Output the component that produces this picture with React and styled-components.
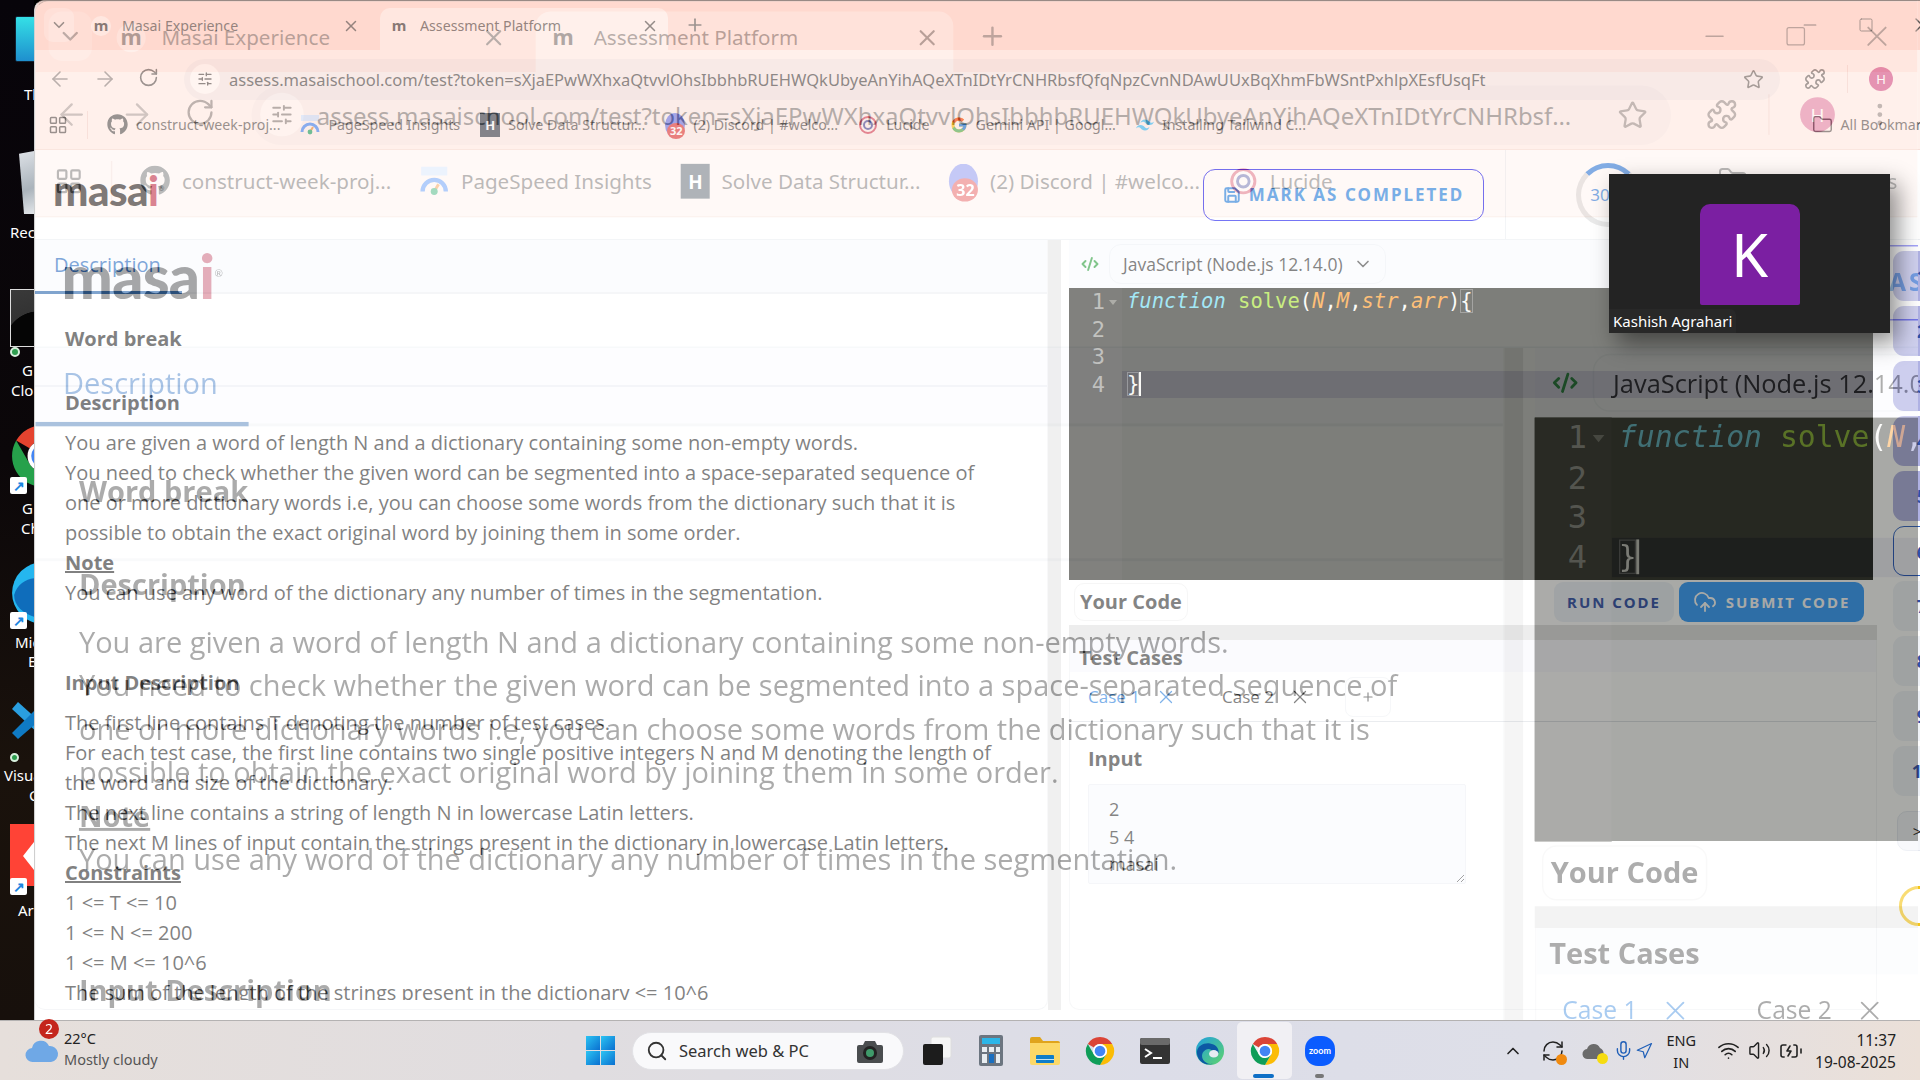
import styled, { createGlobalStyle } from "styled-components";
import {
  ArrowLeft,
  ArrowRight,
  RotateCw,
  Star,
  Puzzle,
  MoreVertical,
  X,
  Plus,
  ChevronDown,
  ChevronUp,
  LayoutGrid,
  Folder,
  Search,
  Minus,
  Square,
  SlidersHorizontal,
  CloudUpload,
  CodeXml,
  Save,
  Wifi,
  Volume2,
  RefreshCw,
  Mic,
  Navigation,
  BatteryCharging,
} from "lucide-react";
import { FaGithub } from "react-icons/fa";
import { FcGoogle } from "react-icons/fc";
import { SiTailwindcss } from "react-icons/si";

const PAGE_URL =
  "assess.masaischool.com/test?token=sXjaEPwWXhxaQtvvlOhsIbbhbRUEHWQkUbyeAnYihAQeXTnIDtYrCNHRbsfQfqNpzCvnNDAwUUxBqXhmFbWSntPxhlpXEsfUsqFt";

const GlobalStyle = createGlobalStyle`
  html, body {
    margin: 0;
    padding: 0;
    overflow: hidden;
    background: #000;
  }
  * { box-sizing: border-box; }
`;

const Screen = styled.div`
  position: relative;
  width: 1920px;
  height: 1080px;
  overflow: hidden;
  display: flex;
  flex-direction: column;
  font-family: "Noto Sans", "Open Sans", sans-serif;
`;
const MainRow = styled.div`
  display: flex;
  height: 1020px;
  overflow: hidden;
`;

/* desktop strip */
const Desktop = styled.div`
  position: relative;
  flex: 0 0 34px;
  height: 100%;
  overflow: hidden;
  background: linear-gradient(180deg, #07040a 0%, #0b0709 45%, #1a120c 75%, #17100c 100%);
`;
const DesktopLabel = styled.span`
  position: absolute;
  left: ${(p) => p.$x}px;
  top: ${(p) => p.$y}px;
  color: #fff;
  font-size: 15px;
  line-height: 20px;
  white-space: nowrap;
`;
const DesktopArt = styled.div`
  position: absolute;
  left: ${(p) => p.$x}px;
  top: ${(p) => p.$y}px;
  width: ${(p) => p.$w}px;
  height: ${(p) => p.$h}px;
  display: block;
`;
const TealTile = styled(DesktopArt)`
  background: linear-gradient(180deg, #34e0e6, #1e8fce);
  border-radius: 2px;
  border: 1px solid #123;
`;
const BinArt = styled(DesktopArt)`
  background: linear-gradient(160deg, #dfe3e8, #aab3bb 60%, #e6e9ec);
  clip-path: polygon(0 6%, 100% 0, 100% 100%, 25% 100%);
`;
const ThumbArt = styled(DesktopArt)`
  background: radial-gradient(circle at 100% 100%, #050505 55%, #333 56%, #3a3a3a);
  border: 1px solid #ddd;
`;
const RedTile = styled(DesktopArt)`
  background: #ff4336;
`;
const WhiteArrow = styled(DesktopArt)`
  background: #fff;
  clip-path: polygon(100% 0, 100% 100%, 0 50%);
`;
const CheckDot = styled(DesktopArt)`
  background: #2e9e4f;
  border: 2px solid #d7f0dd;
  border-radius: 50%;
`;
const Shortcut = styled(DesktopArt)`
  width: 17px;
  height: 17px;
  background: #fff;
  border-radius: 2px;
  display: flex;
  align-items: center;
  justify-content: center;
  color: #1b86e0;
  font-size: 14px;
  font-weight: 700;
  line-height: 1;
`;

/* browser */
const Frame = styled.div`
  width: ${(p) => p.$w}px;
  height: ${(p) => p.$h}px;
  flex-shrink: 0;
  overflow: hidden;
  background: #fff;
  border-top: 1px solid #9a8a85;
  border-left: 1px solid #cfcfcf;
  border-top-left-radius: 10px;
  display: flex;
  flex-direction: column;
`;
const TabStrip = styled.div`
  height: 49px;
  flex-shrink: 0;
  background: #ffd9cf;
  display: flex;
  align-items: flex-end;
  color: #5c5654;
`;
const TabSearch = styled.div`
  width: 30px;
  height: 34px;
  margin: 0 8px 8px 9px;
  border-radius: 9px;
  background: #ffe5de;
  display: flex;
  align-items: center;
  justify-content: center;
`;
const Tab = styled.div`
  width: ${(p) => p.$w}px;
  height: 42px;
  padding: 0 9px 7px 9px;
  margin-right: 11px;
  border-radius: 10px 10px 0 0;
  background: ${(p) => (p.$active ? "#fff1ec" : "transparent")};
  display: flex;
  align-items: center;
  gap: 11px;
  font-size: 14.2px;
  color: #4f4a48;
  white-space: nowrap;
`;
const Favicon = styled.span`
  width: 20px;
  height: 20px;
  border-radius: 50%;
  flex-shrink: 0;
  background: #fff1ec;
  color: #3a3a3a;
  font-weight: 700;
  font-size: 15px;
  line-height: 18px;
  text-align: center;
`;
const TabTitle = styled.span`
  flex: 1;
  overflow: hidden;
`;
const AddTab = styled.div`
  width: 32px;
  height: 34px;
  display: flex;
  align-items: center;
  justify-content: center;
  margin-bottom: 8px;
`;
const WinControls = styled.div`
  margin-left: auto;
  display: flex;
  align-self: stretch;
`;
const WinButton = styled.div`
  width: 56px;
  display: flex;
  align-items: center;
  justify-content: center;
  padding-bottom: 1px;
  color: #5c5654;
`;
const Toolbar = styled.div`
  height: 50px;
  flex-shrink: 0;
  padding-top: 8px;
  background: #fff1ec;
  display: flex;
  align-items: center;
  color: #6b6462;
`;
const NavGroup = styled.div`
  width: 149px;
  flex-shrink: 0;
  padding-left: 13px;
  display: flex;
  gap: 21px;
  color: #8c8482;
`;
const AddressPill = styled.div`
  flex: 1;
  min-width: 0;
  height: 41px;
  border-radius: 21px;
  background: #f4e7e4;
  display: flex;
  align-items: center;
  padding: 0 16px 0 6px;
`;
const SiteInfo = styled.span`
  width: 30px;
  height: 30px;
  flex-shrink: 0;
  border-radius: 50%;
  background: #fff8f5;
  display: flex;
  align-items: center;
  justify-content: center;
  margin-right: 9px;
  color: #4f4a48;
`;
const UrlText = styled.span`
  flex: 1;
  min-width: 0;
  overflow: hidden;
  white-space: nowrap;
  text-overflow: ellipsis;
  font-size: 16.5px;
  color: #444;
  margin-right: 24px;
`;
const ToolbarEnd = styled.div`
  width: 170px;
  flex-shrink: 0;
  display: flex;
  align-items: center;
  padding-left: 24px;
`;
const ToolbarRule = styled.span`
  width: 1px;
  height: 28px;
  background: #f3d6cf;
  margin: 0 21px;
`;
const BookmarkRule = styled.span`
  width: 1px;
  height: 28px;
  background: #f3d6cf;
  margin: 0 19px;
`;
const ProfileBadge = styled.span`
  width: 24px;
  height: 24px;
  border-radius: 50%;
  flex-shrink: 0;
  background: #d4568c;
  color: #fff;
  font-size: 13px;
  text-align: center;
  line-height: 24px;
  margin-right: 21px;
`;
const BookmarkBar = styled.div`
  height: 50px;
  flex-shrink: 0;
  background: #fff1ec;
  border-bottom: 1px solid #f7dfd8;
  display: flex;
  align-items: center;
  padding-left: 13px;
  color: #57514f;
`;
const BookmarkItem = styled.div`
  display: flex;
  align-items: center;
  gap: 8px;
  margin-right: 20px;
  font-size: 14.2px;
  white-space: nowrap;
  flex-shrink: 0;
`;
const BookmarkEnd = styled.div`
  margin-left: auto;
  display: flex;
  align-items: center;
  gap: 8px;
  padding-right: 14px;
  font-size: 14.2px;
  white-space: nowrap;
`;
const HackerIcon = styled.span`
  width: 20px;
  height: 24px;
  background: #39424e;
  color: #fff;
  font-size: 13px;
  font-weight: 700;
  text-align: center;
  line-height: 24px;
`;
const DiscordIcon = styled.span`
  position: relative;
  width: 20px;
  height: 24px;
  border-radius: 50%;
  background: #6f78e8;
`;
const DiscordBadge = styled.span`
  position: absolute;
  left: 2px;
  bottom: -2px;
  width: 18px;
  height: 16px;
  border-radius: 50%;
  background: #e23b3b;
  color: #fff;
  font-size: 11px;
  font-weight: 700;
  line-height: 16px;
  text-align: center;
`;

/* page */
const PageArea = styled.div`
  width: 1916px;
  flex: 1;
  min-height: 0;
  background: #fff;
  display: flex;
  flex-direction: column;
`;
const PageHeader = styled.div`
  height: 90px;
  flex-shrink: 0;
  display: flex;
  align-items: center;
  padding-left: 18px;
  border-bottom: 1px solid #eceff2;
`;
const Logo = styled.div`
  font-family: "Lato", sans-serif;
  font-weight: 900;
  font-size: 42px;
  letter-spacing: -0.5px;
  color: #2a2a2a;
  line-height: 1;
  padding-bottom: 10px;
`;
const LogoAccent = styled.span`
  color: #c23b55;
`;
const LogoMark = styled.sup`
  font-size: 7px;
  font-weight: 400;
  color: #555;
`;
const MarkButton = styled.div`
  margin-left: auto;
  margin-right: 21px;
  width: 281px;
  height: 52px;
  border: 1.5px solid #1a1aee;
  border-radius: 12px;
  display: flex;
  align-items: center;
  justify-content: center;
  gap: 8px;
  color: #2082e3;
  font-size: 17px;
  font-weight: 700;
  letter-spacing: 2px;
  white-space: nowrap;
`;
const TimerBox = styled.div`
  width: 446px;
  height: 100%;
  border-left: 1px solid #eceff2;
  padding-left: 70px;
  display: flex;
  align-items: center;
`;
const TimerRing = styled.div`
  width: 64px;
  height: 64px;
  border-radius: 50%;
  border: 5px solid #dcdcdc;
  border-top-color: #2f7fe0;
  padding-right: 16px;
  color: #2f7fe0;
  font-size: 17px;
  display: flex;
  align-items: center;
  justify-content: center;
`;
const Workspace = styled.div`
  flex: 1;
  min-height: 0;
  display: flex;
  align-items: stretch;
`;
const LeftPanel = styled.div`
  width: 1013px;
  flex-shrink: 0;
  height: 770px;
  border-bottom: 1px solid #eef0f3;
  border-right: 1px solid #f3f4f6;
  border-radius: 0 0 10px 10px;
  display: flex;
  flex-direction: column;
`;
const TabRow = styled.div`
  height: 54px;
  flex-shrink: 0;
  background: #f9fbfe;
  border-bottom: 2px solid #eef0f3;
  display: flex;
`;
const DescriptionTab = styled.div`
  width: 147px;
  height: 54px;
  border-bottom: 3px solid #2c68ad;
  padding-left: 19px;
  color: #2a6bc0;
  font-family: "Open Sans", sans-serif;
  font-size: 20px;
  line-height: 50px;
`;
const ProblemScroll = styled.div`
  height: 706px;
  overflow: hidden;
  padding-top: 30px;
  font-family: "Open Sans", sans-serif;
  font-size: 20px;
  line-height: 30px;
  color: #2e2e2e;
`;
const ProblemTitle = styled.div`
  font-weight: 700;
  padding-left: 30px;
  height: 61px;
`;
const SectionRule = styled.div`
  height: 2px;
  background: #f1f2f5;
`;
const SectionHeading = styled.div`
  font-weight: 700;
  padding-left: 30px;
  margin: ${(p) => p.$margin || "0"};
  text-decoration: ${(p) => (p.$under ? "underline" : "none")};
`;
const TextLine = styled.div`
  padding-left: 30px;
  white-space: nowrap;
`;
const Resizer = styled.div`
  width: 13px;
  height: 770px;
  flex-shrink: 0;
  background: #e6e6e6;
  margin-right: 8px;
`;
const RightColumn = styled.div`
  width: 808px;
  flex-shrink: 0;
  height: 770px;
  display: flex;
  flex-direction: column;
`;
const LanguageRow = styled.div`
  height: 48px;
  flex-shrink: 0;
  background: #f9fbfe;
  display: flex;
  align-items: center;
  padding-left: 12px;
  color: #2e9e3f;
`;
const LanguageSelect = styled.div`
  width: 277px;
  height: 40px;
  margin-left: 10px;
  border: 1px solid #edf0f5;
  border-radius: 12px;
  display: flex;
  align-items: center;
  justify-content: space-between;
  padding: 0 12px 0 13px;
  font-family: "Open Sans", sans-serif;
  font-size: 17.5px;
  color: #333;
  white-space: nowrap;
`;
const Editor = styled.div`
  height: 292px;
  flex-shrink: 0;
  margin-right: 4px;
  background: #272822;
  display: flex;
  font-family: "DejaVu Sans Mono", "Liberation Mono", monospace;
  font-size: 20.5px;
  line-height: 27.6px;
  color: #f8f8f2;
`;
const EditorGutter = styled.div`
  position: relative;
  width: 53px;
  flex-shrink: 0;
  background: #2d2e28;
  color: #9a9a94;
  text-align: right;
  padding-right: 17px;
  font-size: 22px;
`;
const FoldMark = styled.span`
  position: absolute;
  right: 5px;
  top: 12px;
  border: 4px solid transparent;
  border-top: 5px solid #77776f;
`;
const EditorCode = styled.div`
  flex: 1;
`;
const CodeRow = styled.div`
  height: 27.6px;
  padding-left: 5px;
  background: ${(p) => (p.$active ? "#111217" : "transparent")};
  white-space: pre;
`;
const Keyword = styled.span`
  color: #66d9ef;
  font-style: italic;
`;
const FnName = styled.span`
  color: #a6e22e;
`;
const Param = styled.span`
  color: #fd971f;
  font-style: italic;
`;
const Bracket = styled.span`
  box-shadow: inset 0 0 0 1px rgba(255, 255, 255, 0.3);
  border-right: ${(p) => (p.$cursor ? "2px solid #f8f8f0" : "0")};
`;
const ActionsRow = styled.div`
  height: 45px;
  flex-shrink: 0;
  display: flex;
  align-items: center;
  padding: 0 13px 2px 5px;
`;
const YourCode = styled.div`
  border: 1px solid #f1f1f1;
  border-radius: 10px;
  padding: 0 5px;
  line-height: 36px;
  font-family: "Open Sans", sans-serif;
  font-size: 20px;
  font-weight: 700;
  color: #333;
`;
const RunButton = styled.div`
  margin-left: auto;
  width: 120px;
  height: 40px;
  border-radius: 9px;
  background: #edf2f8;
  color: #2f4fa8;
  font-size: 15px;
  font-weight: 700;
  letter-spacing: 2px;
  text-align: center;
  line-height: 40px;
`;
const SubmitButton = styled.div`
  margin-left: 5px;
  width: 185px;
  height: 40px;
  border-radius: 9px;
  background: #349dff;
  color: #fff;
  font-size: 15px;
  font-weight: 700;
  letter-spacing: 2px;
  display: flex;
  align-items: center;
  justify-content: center;
  gap: 9px;
`;
const GutterBar = styled.div`
  height: 15px;
  flex-shrink: 0;
  background: #e2e2e2;
`;
const TestCard = styled.div`
  flex: 1;
  border: 1px solid #f2f3f5;
  border-top: 0;
  border-radius: 0 0 10px 10px;
  font-family: "Open Sans", sans-serif;
`;
const TestTitle = styled.div`
  height: 32px;
  background: #f8f9fd;
  padding-left: 9px;
  font-size: 20px;
  font-weight: 700;
  color: #333;
  line-height: 36px;
`;
const CaseRow = styled.div`
  height: 50px;
  padding-left: 18px;
  border-bottom: 1px solid #dcdfe4;
  display: flex;
  align-items: center;
`;
const CaseTab = styled.div`
  width: ${(p) => p.$w}px;
  display: flex;
  align-items: center;
  gap: 15px;
  font-size: 17px;
  color: ${(p) => (p.$active ? "#2a7fdc" : "#333")};
  white-space: nowrap;
`;
const AddCase = styled.div`
  width: 46px;
  height: 40px;
  border: 1px solid #f0f2f5;
  border-radius: 8px;
  display: flex;
  align-items: center;
  justify-content: center;
  color: #444;
`;
const InputLabel = styled.div`
  margin: 22px 0 0 18px;
  font-size: 20px;
  font-weight: 700;
  color: #333;
  line-height: 30px;
`;
const InputBox = styled.textarea`
  display: block;
  width: 378px;
  height: 100px;
  margin: 10px 0 0 18px;
  padding: 11px 20px;
  border: 1px solid #eef0f5;
  border-radius: 2px;
  background: #f9fbfe;
  font-family: "Open Sans", sans-serif;
  font-size: 18px;
  line-height: 27.5px;
  color: #333;
  overflow: hidden;
  outline: none;
`;
const QuestionRail = styled.div`
  position: relative;
  flex: 1;
  padding: 11px 0 0 16px;
  display: flex;
  flex-direction: column;
  gap: 5px;
`;
const QuestionTile = styled.div`
  width: 58px;
  height: 50px;
  flex-shrink: 0;
  border-radius: 11px;
  background: ${(p) => (p.$done ? "#afb1e3" : p.$current ? "#fff" : "#f0f3f8")};
  border: ${(p) => (p.$current ? "1px solid #2f62c4" : "0")};
  color: #2f4fa8;
  font-size: 18px;
  font-weight: 700;
  text-align: center;
  line-height: 50px;
`;
const NextTile = styled.div`
  width: 40px;
  height: 40px;
  flex-shrink: 0;
  margin: 10px 0 0 4px;
  border-radius: 10px;
  background: #f4f6fa;
  border: 1px solid #e4e8f0;
  font-size: 15px;
  text-align: center;
  line-height: 38px;
  color: #222;
`;
const ClockRing = styled.div`
  width: 40px;
  height: 40px;
  flex-shrink: 0;
  margin: 30px 0 0 6px;
  border-radius: 50%;
  border: 3px solid #f5c518;
`;

/* ghost copy of the same window, cross-faded over the real one */
const GhostLayer = styled.div`
  position: absolute;
  left: 34px;
  top: 0;
  width: 1886px;
  height: 1020px;
  overflow: hidden;
  opacity: 0.4;
`;
const GhostScale = styled.div`
  width: 1299px;
  height: 704px;
  transform: scale(1.45);
  transform-origin: 0 0;
`;

/* zoom call tile */
const ZoomCard = styled.div`
  position: absolute;
  left: 1609px;
  top: 174px;
  width: 281px;
  height: 159px;
  background: #232323;
  box-shadow: 8px 10px 22px rgba(0, 0, 0, 0.45);
  display: flex;
  justify-content: center;
  padding-top: 30px;
`;
const ZoomAvatar = styled.div`
  width: 100px;
  height: 101px;
  border-radius: 10px 10px 2px 2px;
  background: #7b1fa2;
  color: #fff;
  font-size: 60px;
  text-align: center;
  line-height: 101px;
`;
const ZoomName = styled.div`
  position: absolute;
  left: 0;
  bottom: 0;
  padding: 0 4px;
  height: 24px;
  line-height: 24px;
  border-radius: 0 6px 0 0;
  background: #282828;
  color: #fff;
  font-size: 15px;
`;

/* taskbar */
const Taskbar = styled.div`
  position: relative;
  height: 60px;
  flex-shrink: 0;
  border-top: 1px solid #b4b2b2;
  background: linear-gradient(90deg, #e6dfdb 0%, #e0dde0 30%, #dcdde8 60%, #dedfe8 80%, #ebe0d8 100%);
  display: flex;
  align-items: center;
  color: #222;
`;
const Weather = styled.div`
  position: relative;
  width: 573px;
  flex-shrink: 0;
  padding: 0 0 4px 64px;
  font-size: 14.5px;
  line-height: 21px;
`;
const WeatherSub = styled.div`
  color: #555;
`;
const WeatherIcon = styled.svg`
  position: absolute;
  left: 24px;
  top: 10px;
`;
const WeatherBadge = styled.span`
  position: absolute;
  left: 39px;
  top: -9px;
  width: 20px;
  height: 20px;
  border-radius: 50%;
  background: #c4261d;
  color: #fff;
  font-size: 14px;
  text-align: center;
  line-height: 20px;
`;
const TaskButton = styled.div`
  position: relative;
  width: ${(p) => p.$w || 55}px;
  height: 57px;
  flex-shrink: 0;
  display: flex;
  align-items: center;
  justify-content: center;
  border-radius: 5px;
  background: ${(p) => (p.$active ? "#f1f0f4" : "transparent")};
`;
const ActiveBar = styled.span`
  position: absolute;
  bottom: 1px;
  left: 16px;
  width: 21px;
  height: 4px;
  border-radius: 2px;
  background: #0f6fc6;
`;
const RunningDot = styled.span`
  position: absolute;
  bottom: 1px;
  left: 23px;
  width: 9px;
  height: 4px;
  border-radius: 2px;
  background: #777;
`;
const SearchPill = styled.div`
  width: 272px;
  height: 38px;
  margin: 0 5px 0 4px;
  flex-shrink: 0;
  border-radius: 19px;
  background: #f9f9fb;
  border: 1px solid #e2e2e6;
  display: flex;
  align-items: center;
  padding: 0 18px 0 13px;
  gap: 11px;
  font-size: 16.5px;
  color: #333;
`;
const SearchText = styled.span`
  flex: 1;
  white-space: nowrap;
`;
const Tray = styled.div`
  margin-left: auto;
  display: flex;
  align-items: center;
  padding-right: 24px;
`;
const TrayIcon = styled.span`
  position: relative;
  display: flex;
  align-items: center;
  gap: 1px;
  margin-right: ${(p) => p.$gap || 14}px;
  color: ${(p) => p.$color || "#222"};
`;
const TrayDot = styled.span`
  position: absolute;
  right: -2px;
  bottom: -2px;
  width: 11px;
  height: 11px;
  border-radius: 50%;
  background: ${(p) => p.$color};
`;
const LangText = styled.div`
  font-size: 14.5px;
  line-height: 22px;
  text-align: center;
  margin: 0 21px 0 4px;
`;
const ClockText = styled.div`
  margin-left: 4px;
  font-size: 15.5px;
  line-height: 22px;
  text-align: right;
`;

function ChromeIcon() {
  return (
    <svg width="30" height="30" viewBox="0 0 32 32">
      <path d="M16 1a15 15 0 0 1 13 7.5H16a7.5 7.5 0 0 0-6.5 3.75L3 8.5A15 15 0 0 1 16 1z" fill="#db4437" />
      <path d="M29 8.5A15 15 0 0 1 16 31l6.5-11.25A7.5 7.5 0 0 0 16 8.5z" fill="#fbbc05" />
      <path d="M16 31A15 15 0 0 1 3 8.5l6.5 11.25A7.5 7.5 0 0 0 16 23.5L22.5 19.75z" fill="#0f9d58" />
      <circle cx="16" cy="16" r="7.5" fill="#fff" />
      <circle cx="16" cy="16" r="5.7" fill="#4285f4" />
    </svg>
  );
}

function EdgeIcon() {
  return (
    <svg width="30" height="30" viewBox="0 0 32 32">
      <defs>
        <linearGradient id="edgeTop" x1="0" y1="0" x2="1" y2="1">
          <stop offset="0" stopColor="#1f9fe0" />
          <stop offset="1" stopColor="#5fd46a" />
        </linearGradient>
      </defs>
      <circle cx="16" cy="16" r="15" fill="url(#edgeTop)" />
      <path d="M2 17c1-7 8-10 14-9 6 1 10 5 9 10-1 3-5 4-8 3 4-5-1-9-6-6-5 3-5 11 2 14 2 1 5 1 7 0-8 4-18-2-18-12z" fill="#0c59a4" />
      <ellipse cx="20" cy="19" rx="5" ry="4" fill="#e6ecf2" />
    </svg>
  );
}

function StartIcon() {
  return (
    <svg width="29" height="29" viewBox="0 0 29 29">
      <defs>
        <linearGradient id="startBlue" x1="0" y1="0" x2="1" y2="1">
          <stop offset="0" stopColor="#2bc4f3" />
          <stop offset="1" stopColor="#0a6fd0" />
        </linearGradient>
      </defs>
      <rect x="0" y="0" width="14" height="14" fill="url(#startBlue)" />
      <rect x="15" y="0" width="14" height="14" fill="url(#startBlue)" />
      <rect x="0" y="15" width="14" height="14" fill="url(#startBlue)" />
      <rect x="15" y="15" width="14" height="14" fill="url(#startBlue)" />
    </svg>
  );
}

function CameraIcon() {
  return (
    <svg width="30" height="30" viewBox="0 0 30 30">
      <path d="M10 5h10l2 4h4a2 2 0 0 1 2 2v14a2 2 0 0 1-2 2H4a2 2 0 0 1-2-2V11a2 2 0 0 1 2-2h4z" fill="#4a4d4f" />
      <circle cx="15" cy="17" r="7" fill="#222" />
      <circle cx="15" cy="17" r="4" fill="#3f9a6a" />
    </svg>
  );
}

function TaskViewIcon() {
  return (
    <svg width="30" height="30" viewBox="0 0 30 30">
      <rect x="9" y="1" width="20" height="21" rx="2" fill="#f6f6f6" stroke="#dedede" />
      <rect x="1" y="8" width="20" height="21" rx="2" fill="#1c1c1c" />
    </svg>
  );
}

function CalcIcon() {
  return (
    <svg width="24" height="31" viewBox="0 0 24 31">
      <rect width="24" height="31" rx="2" fill="#6c7580" />
      <rect x="3" y="3" width="18" height="6" fill="#2cb6e8" />
      <rect x="3" y="12" width="5" height="5" fill="#e8edf1" />
      <rect x="10" y="12" width="5" height="5" fill="#e8edf1" />
      <rect x="17" y="12" width="4" height="5" fill="#e8edf1" />
      <rect x="3" y="19" width="5" height="9" fill="#e8edf1" />
      <rect x="10" y="19" width="5" height="9" fill="#1a6fc0" />
      <rect x="17" y="19" width="4" height="9" fill="#e8edf1" />
    </svg>
  );
}

function FolderIcon() {
  return (
    <svg width="30" height="28" viewBox="0 0 30 28">
      <path d="M0 2a2 2 0 0 1 2-2h8l3 4h15a2 2 0 0 1 2 2v2H0z" fill="#e0a41c" />
      <path d="M0 6h30v20a2 2 0 0 1-2 2H2a2 2 0 0 1-2-2z" fill="#fcd867" />
      <rect x="6" y="18" width="18" height="8" rx="1" fill="#0f7dc9" />
      <rect x="6" y="22" width="18" height="1" fill="#bfe2f6" />
    </svg>
  );
}

function TerminalIcon() {
  return (
    <svg width="30" height="26" viewBox="0 0 30 26">
      <rect width="30" height="26" rx="2" fill="#333" />
      <rect width="30" height="7" rx="2" fill="#6a6a6a" />
      <path d="M5 11l6 4-6 4" stroke="#fff" strokeWidth="2" fill="none" />
      <path d="M13 20h9" stroke="#fff" strokeWidth="2" />
    </svg>
  );
}

function ZoomLogo() {
  return (
    <svg width="30" height="30" viewBox="0 0 30 30">
      <rect width="30" height="30" rx="13" fill="#0b5cff" />
      <text x="15" y="18" textAnchor="middle" fontFamily="Lato, sans-serif" fontSize="9" fontWeight="700" fill="#fff">
        zoom
      </text>
    </svg>
  );
}

function PageSpeedIcon() {
  return (
    <svg width="20" height="22" viewBox="0 0 20 22">
      <rect x="1" y="1" width="18" height="6" fill="#cfe0fb" />
      <path d="M2 18a8 8 0 0 1 16 0" fill="none" stroke="#4285f4" strokeWidth="3" />
      <path d="M10 18l3-5" stroke="#f28b30" strokeWidth="2" />
      <circle cx="10" cy="18" r="2.4" fill="#1aa260" />
    </svg>
  );
}

function LucideIcon() {
  return (
    <svg width="20" height="22" viewBox="0 0 20 22" fill="none">
      <circle cx="10" cy="11" r="8" stroke="#d8455a" strokeWidth="2" />
      <circle cx="10" cy="11" r="4" stroke="#4d4d9a" strokeWidth="2" />
    </svg>
  );
}

function BrowserWindow({ width, height, bookmarkCount = 7 }) {
  const bookmarks = [
    { name: "construct-week-proj...", icon: <FaGithub size={21} color="#555" /> },
    { name: "PageSpeed Insights", icon: <PageSpeedIcon /> },
    { name: "Solve Data Structur...", icon: <HackerIcon>H</HackerIcon> },
    { name: "(2) Discord | #welco...", icon: <DiscordIcon><DiscordBadge>32</DiscordBadge></DiscordIcon> },
    { name: "Lucide", icon: <LucideIcon /> },
    { name: "Gemini API  |  Googl...", icon: <FcGoogle size={18} /> },
    { name: "Installing Tailwind C...", icon: <SiTailwindcss size={18} color="#38bdf8" /> },
  ];

  return (
    <Frame $w={width} $h={height}>
      <TabStrip>
        <TabSearch>
          <ChevronDown size={18} strokeWidth={2.2} />
        </TabSearch>
        <Tab $w={287}>
          <Favicon>m</Favicon>
          <TabTitle>Masai Experience</TabTitle>
          <X size={18} />
        </Tab>
        <Tab $active $w={288}>
          <Favicon>m</Favicon>
          <TabTitle>Assessment Platform</TabTitle>
          <X size={18} />
        </Tab>
        <AddTab>
          <Plus size={20} />
        </AddTab>
        <WinControls>
          <WinButton><Minus size={20} strokeWidth={1.3} /></WinButton>
          <WinButton><Square size={16} strokeWidth={1.3} /></WinButton>
          <WinButton><X size={24} strokeWidth={1.3} /></WinButton>
        </WinControls>
      </TabStrip>
      <Toolbar>
        <NavGroup>
          <ArrowLeft size={24} strokeWidth={1.6} />
          <ArrowRight size={24} strokeWidth={1.6} />
          <RotateCw size={21} strokeWidth={1.8} color="#5c5654" />
        </NavGroup>
        <AddressPill>
          <SiteInfo><SlidersHorizontal size={16} /></SiteInfo>
          <UrlText>{PAGE_URL}</UrlText>
          <Star size={21} strokeWidth={1.8} />
        </AddressPill>
        <ToolbarEnd>
          <Puzzle size={22} strokeWidth={1.8} />
          <ToolbarRule />
          <ProfileBadge>H</ProfileBadge>
          <MoreVertical size={20} />
        </ToolbarEnd>
      </Toolbar>
      <BookmarkBar>
        <LayoutGrid size={20} strokeWidth={1.8} />
        <BookmarkRule />
        {bookmarks.slice(0, bookmarkCount).map((b) => (
          <BookmarkItem key={b.name}>
            {b.icon}
            {b.name}
          </BookmarkItem>
        ))}
        <BookmarkEnd>
          <Folder size={21} strokeWidth={1.6} />
          All Bookmarks
        </BookmarkEnd>
      </BookmarkBar>
      <ProblemPage />
    </Frame>
  );
}

function ProblemPage() {
  const tiles = ["1", "2", "3", "4", "5", "6", "7", "8", "9", "10"];
  return (
    <PageArea>
      <PageHeader>
        <Logo>
          masa<LogoAccent>i</LogoAccent><LogoMark>®</LogoMark>
        </Logo>
        <MarkButton>
          <Save size={18} strokeWidth={2.6} />
          MARK AS COMPLETED
        </MarkButton>
        <TimerBox>
          <TimerRing>30</TimerRing>
        </TimerBox>
      </PageHeader>
      <Workspace>
        <LeftPanel>
          <TabRow>
            <DescriptionTab>Description</DescriptionTab>
          </TabRow>
          <ProblemScroll>
            <ProblemTitle>Word break</ProblemTitle>
            <SectionRule />
            <SectionHeading $margin="1px 0 10px">Description</SectionHeading>
            <TextLine>You are given a word of length N and a dictionary containing some non-empty words.</TextLine>
            <TextLine>You need to check whether the given word can be segmented into a space-separated sequence of</TextLine>
            <TextLine>one or more dictionary words i.e, you can choose some words from the dictionary such that it is</TextLine>
            <TextLine>possible to obtain the exact original word by joining them in some order.</TextLine>
            <SectionHeading $under>Note</SectionHeading>
            <TextLine>You can use any word of the dictionary any number of times in the segmentation.</TextLine>
            <SectionHeading $margin="60px 0 10px">Input Description</SectionHeading>
            <TextLine>The first line contains T denoting the number of test cases.</TextLine>
            <TextLine>For each test case, the first line contains two single positive integers N and M denoting the length of</TextLine>
            <TextLine>the word and size of the dictionary.</TextLine>
            <TextLine>The next line contains a string of length N in lowercase Latin letters.</TextLine>
            <TextLine>The next M lines of input contain the strings present in the dictionary in lowercase Latin letters.</TextLine>
            <SectionHeading $under>Constraints</SectionHeading>
            <TextLine>1 &lt;= T &lt;= 10</TextLine>
            <TextLine>1 &lt;= N &lt;= 200</TextLine>
            <TextLine>1 &lt;= M &lt;= 10^6</TextLine>
            <TextLine>The sum of the length of the strings present in the dictionary &lt;= 10^6</TextLine>
          </ProblemScroll>
        </LeftPanel>
        <Resizer />
        <RightColumn>
          <LanguageRow>
            <CodeXml size={18} strokeWidth={2.6} />
            <LanguageSelect>
              JavaScript (Node.js 12.14.0)
              <ChevronDown size={20} color="#444" />
            </LanguageSelect>
          </LanguageRow>
          <Editor>
            <EditorGutter>
              1<br />2<br />3<br />4
              <FoldMark />
            </EditorGutter>
            <EditorCode>
              <CodeRow>
                <Keyword>function</Keyword> <FnName>solve</FnName>(<Param>N</Param>,<Param>M</Param>,<Param>str</Param>,<Param>arr</Param>)<Bracket>{"{"}</Bracket>
              </CodeRow>
              <CodeRow />
              <CodeRow />
              <CodeRow $active>
                <Bracket $cursor>{"}"}</Bracket>
              </CodeRow>
            </EditorCode>
          </Editor>
          <ActionsRow>
            <YourCode>Your Code</YourCode>
            <RunButton>RUN CODE</RunButton>
            <SubmitButton>
              <CloudUpload size={24} strokeWidth={1.8} />
              SUBMIT CODE
            </SubmitButton>
          </ActionsRow>
          <GutterBar />
          <TestCard>
            <TestTitle>Test Cases</TestTitle>
            <CaseRow>
              <CaseTab $active $w={134}>
                Case 1
                <X size={22} strokeWidth={1.4} />
              </CaseTab>
              <CaseTab $w={123}>
                Case 2
                <X size={22} strokeWidth={1.4} />
              </CaseTab>
              <AddCase><Plus size={14} /></AddCase>
            </CaseRow>
            <InputLabel>Input</InputLabel>
            <InputBox readOnly defaultValue={"2\n5 4\nmasai"} />
          </TestCard>
        </RightColumn>
        <QuestionRail>
          {tiles.map((t) => (
            <QuestionTile key={t} $done={Number(t) < 6} $current={t === "6"}>
              {t}
            </QuestionTile>
          ))}
          <NextTile>&gt;</NextTile>
          <ClockRing />
        </QuestionRail>
      </Workspace>
    </PageArea>
  );
}

function DesktopStrip() {
  return (
    <Desktop>
      <TealTile $x={15} $y={16} $w={30} $h={46} />
      <DesktopLabel $x={24} $y={84}>Th</DesktopLabel>
      <BinArt $x={19} $y={150} $w={20} $h={64} />
      <DesktopLabel $x={10} $y={222}>Rec</DesktopLabel>
      <ThumbArt $x={10} $y={289} $w={30} $h={58} />
      <CheckDot $x={10} $y={347} $w={10} $h={10} />
      <DesktopLabel $x={22} $y={360}>G</DesktopLabel>
      <DesktopLabel $x={11} $y={380}>Clo</DesktopLabel>
      <DesktopArt $x={10} $y={423} $w={66} $h={66}>
        <ChromeBadge />
      </DesktopArt>
      <Shortcut $x={10} $y={477}>↗</Shortcut>
      <DesktopLabel $x={22} $y={498}>G</DesktopLabel>
      <DesktopLabel $x={21} $y={518}>Ch</DesktopLabel>
      <DesktopArt $x={10} $y={560} $w={66} $h={66}>
        <EdgeBadge />
      </DesktopArt>
      <Shortcut $x={10} $y={612}>↗</Shortcut>
      <DesktopLabel $x={15} $y={632}>Mic</DesktopLabel>
      <DesktopLabel $x={28} $y={651}>E</DesktopLabel>
      <DesktopArt $x={10} $y={696} $w={50} $h={50}>
        <svg width="50" height="50" viewBox="0 0 50 50">
          <path d="M2 13L8 6l30 27-7 7z" fill="#2a9fe0" />
          <path d="M2 37l6 6 30-26-7-9z" fill="#0f7ac4" />
        </svg>
      </DesktopArt>
      <CheckDot $x={10} $y={753} $w={9} $h={9} />
      <DesktopLabel $x={4} $y={765}>Visual</DesktopLabel>
      <DesktopLabel $x={29} $y={785}>C</DesktopLabel>
      <RedTile $x={10} $y={824} $w={30} $h={62} />
      <WhiteArrow $x={23} $y={842} $w={11} $h={28} />
      <Shortcut $x={10} $y={878}>↗</Shortcut>
      <DesktopLabel $x={18} $y={900}>Ar</DesktopLabel>
    </Desktop>
  );
}

function ChromeBadge() {
  return (
    <svg width="66" height="66" viewBox="0 0 32 32">
      <path d="M16 1a15 15 0 0 1 13 7.5H16a7.5 7.5 0 0 0-6.5 3.75L3 8.5A15 15 0 0 1 16 1z" fill="#e5432f" />
      <path d="M16 31A15 15 0 0 1 3 8.5l6.5 11.25A7.5 7.5 0 0 0 16 23.5L22.5 19.75z" fill="#26a14b" />
      <circle cx="16" cy="16" r="7.5" fill="#fff" />
      <circle cx="16" cy="16" r="5.7" fill="#4285f4" />
    </svg>
  );
}

function EdgeBadge() {
  return (
    <svg width="66" height="66" viewBox="0 0 32 32">
      <circle cx="16" cy="16" r="15" fill="#25b6ef" />
      <path d="M2 17c2-7 9-9 14-8 3 1 5 3 4 5-5-2-9 3-5 8 2 3 5 4 8 4-8 5-21 0-21-9z" fill="#0f6dbb" />
    </svg>
  );
}

function TaskbarRow() {
  return (
    <Taskbar>
      <Weather>
        <WeatherIcon width="36" height="26" viewBox="0 0 36 26">
          <path d="M9 24a7 7 0 0 1-1-14 9 9 0 0 1 17-2 8 8 0 0 1 2 16z" fill="#6fa8e6" />
        </WeatherIcon>
        <WeatherBadge>2</WeatherBadge>
        <div>22°C</div>
        <WeatherSub>Mostly cloudy</WeatherSub>
      </Weather>
      <TaskButton><StartIcon /></TaskButton>
      <SearchPill>
        <Search size={22} strokeWidth={2} />
        <SearchText>Search web &amp; PC</SearchText>
        <CameraIcon />
      </SearchPill>
      <TaskButton><TaskViewIcon /></TaskButton>
      <TaskButton $w={53}><CalcIcon /></TaskButton>
      <TaskButton><FolderIcon /></TaskButton>
      <TaskButton><ChromeIcon /></TaskButton>
      <TaskButton><TerminalIcon /></TaskButton>
      <TaskButton><EdgeIcon /></TaskButton>
      <TaskButton $active><ChromeIcon /><ActiveBar /></TaskButton>
      <TaskButton><ZoomLogo /><RunningDot /></TaskButton>
      <Tray>
        <TrayIcon $gap={18}><ChevronUp size={20} /></TrayIcon>
        <TrayIcon $gap={17}>
          <RefreshCw size={24} strokeWidth={1.5} />
          <TrayDot $color="#f08a10" />
        </TrayIcon>
        <TrayIcon $gap={7}>
          <svg width="24" height="22" viewBox="0 0 24 22">
            <path d="M6 19a5 5 0 0 1-1-10 7 7 0 0 1 13-1 6 6 0 0 1 0 11z" fill="#6b6b6b" />
          </svg>
          <TrayDot $color="#f6dc10" />
        </TrayIcon>
        <TrayIcon $gap={9} $color="#1f5fb8">
          <Mic size={21} strokeWidth={1.6} />
          <Navigation size={18} strokeWidth={1.6} />
        </TrayIcon>
        <LangText>
          ENG
          <br />
          IN
        </LangText>
        <TrayIcon $gap={8}><Wifi size={23} strokeWidth={1.7} /></TrayIcon>
        <TrayIcon $gap={8}><Volume2 size={23} strokeWidth={1.5} /></TrayIcon>
        <TrayIcon $gap={8}><BatteryCharging size={24} strokeWidth={1.6} /></TrayIcon>
        <ClockText>
          11:37
          <br />
          19-08-2025
        </ClockText>
      </Tray>
    </Taskbar>
  );
}

export default function App() {
  return (
    <Screen>
      <GlobalStyle />
      <MainRow>
        <DesktopStrip />
        <BrowserWindow width={1916} height={1020} />
      </MainRow>
      <GhostLayer>
        <GhostScale>
          <BrowserWindow width={1299} height={704} bookmarkCount={5} />
        </GhostScale>
      </GhostLayer>
      <ZoomCard>
        <ZoomAvatar>K</ZoomAvatar>
        <ZoomName>Kashish Agrahari</ZoomName>
      </ZoomCard>
      <TaskbarRow />
    </Screen>
  );
}
